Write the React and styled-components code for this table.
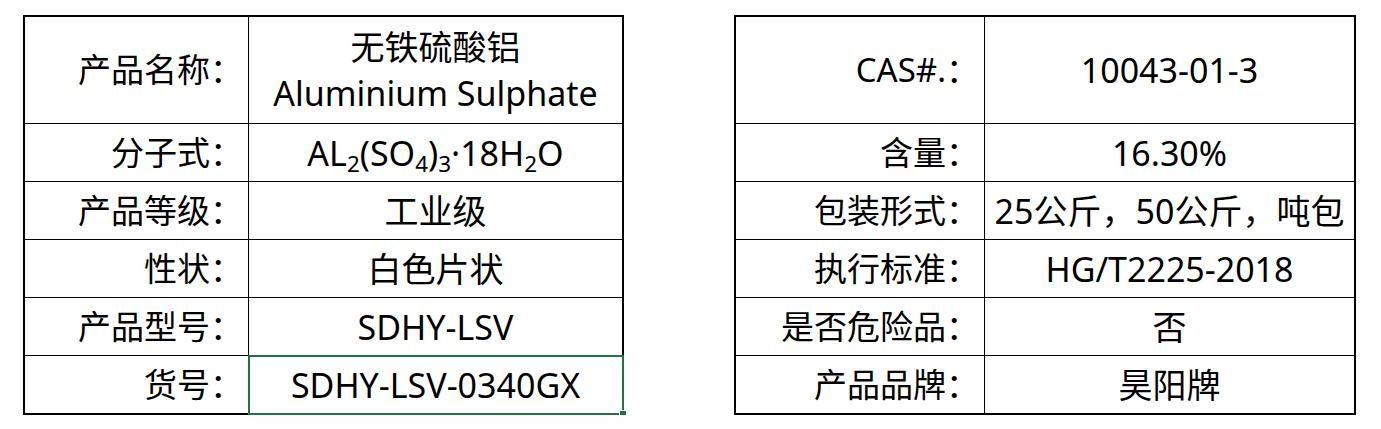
import React from "react";
import styled, { createGlobalStyle } from "styled-components";

const Global = createGlobalStyle`
  html, body { margin: 0; padding: 0; background: #ffffff; }
  body { font-family: "Noto Sans", "Noto Sans CJK SC", sans-serif; color: #000; }
`;

const Page = styled.div`
  display: flex;
  align-items: flex-start;
  gap: 110px;
  padding: 15px 0 0 23px;
`;

const Table = styled.table`
  border-collapse: collapse;
  border: 2px solid #000;
  table-layout: fixed;
  width: ${(p) => p.$width}px;
  font-size: 34px;
  line-height: 46px;
`;

const Row = styled.tr``;

const LabelCell = styled.td`
  width: ${(p) => p.$width}px;
  height: ${(p) => (p.$tall ? 106 : 57)}px;
  border: 1px solid #000;
  padding: 0 5px 0 0;
  font-size: 33px;
  text-align: right;
  vertical-align: middle;
  white-space: nowrap;
`;

const ValueCell = styled.td`
  position: relative;
  border: 1px solid #000;
  padding: 0;
  text-align: center;
  vertical-align: middle;
  white-space: nowrap;

  ${(p) =>
    p.$selected &&
    `
    &::after {
      content: "";
      position: absolute;
      left: -1px; top: -1px; right: -2px; bottom: -2px;
      border: 2px solid #217346;
      pointer-events: none;
    }
    &::before {
      content: "";
      position: absolute;
      right: -5px; bottom: -5px;
      width: 6px; height: 6px;
      background: #217346;
      border: 1px solid #fff;
      z-index: 1;
    }
  `}
`;

const Line = styled.div`
  line-height: 46px;
`;

const Sub = styled.sub`
  font-size: 0.66em;
  vertical-align: -0.28em;
  line-height: 0;
`;

const left = [
  { label: "产品名称：", value: <><Line>无铁硫酸铝</Line><Line>Aluminium Sulphate</Line></>, tall: true },
  { label: "分子式：", value: <>AL<Sub>2</Sub>(SO<Sub>4</Sub>)<Sub>3</Sub>·18H<Sub>2</Sub>O</> },
  { label: "产品等级：", value: "工业级" },
  { label: "性状：", value: "白色片状" },
  { label: "产品型号：", value: "SDHY-LSV" },
  { label: "货号：", value: "SDHY-LSV-0340GX", selected: true },
];

const right = [
  { label: "CAS#.：", value: "10043-01-3", tall: true },
  { label: "含量：", value: "16.30%" },
  { label: "包装形式：", value: "25公斤，50公斤，吨包" },
  { label: "执行标准：", value: "HG/T2225-2018" },
  { label: "是否危险品：", value: "否" },
  { label: "产品品牌：", value: "昊阳牌" },
];

function SpecTable({ rows, width, labelWidth }) {
  return (
    <Table $width={width}>
      <tbody>
        {rows.map((r, i) => (
          <Row key={i}>
            <LabelCell $width={labelWidth} $tall={r.tall}>{r.label}</LabelCell>
            <ValueCell $selected={r.selected}>{r.value}</ValueCell>
          </Row>
        ))}
      </tbody>
    </Table>
  );
}

export default function App() {
  return (
    <>
      <Global />
      <Page>
        <SpecTable rows={left} width={601} labelWidth={218} />
        <SpecTable rows={right} width={622} labelWidth={243} />
      </Page>
    </>
  );
}
